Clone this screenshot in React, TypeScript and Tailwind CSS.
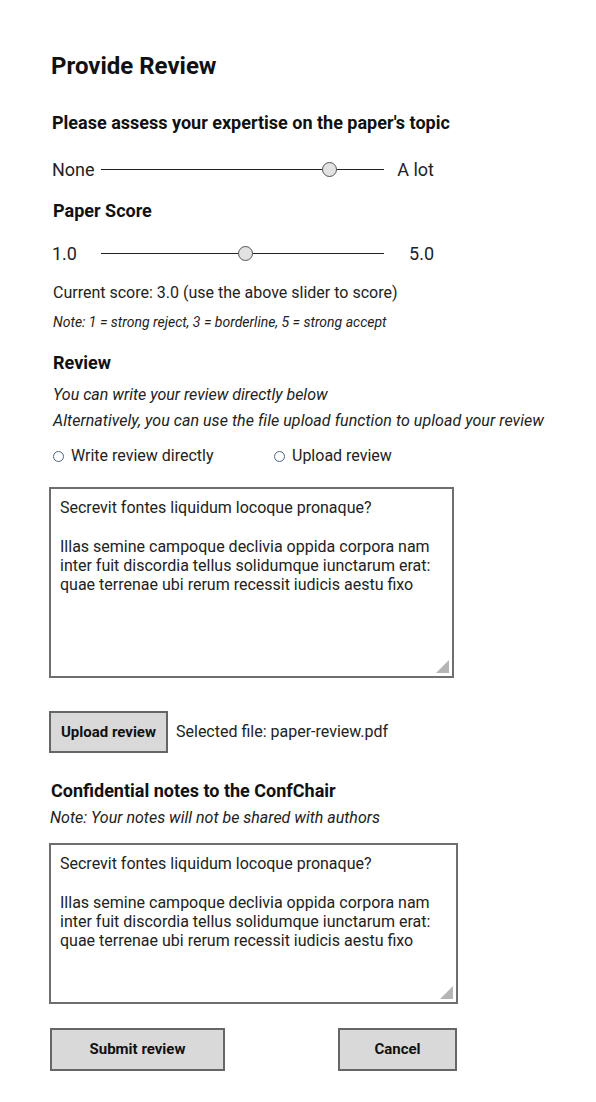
import React from "react";

const font = { fontFamily: "Roboto, 'Liberation Sans', sans-serif" };

function Slider({ left, right, pos }: { left: string; right: string; pos: number }) {
  return (
    <div className="flex items-center h-[24px] text-[18px] text-[#222]">
      <div className="w-[52px] pl-[3px]">{left}</div>
      <div className="relative w-[283px] h-[24px] flex items-center">
        <div className="w-full h-px bg-[#222]" />
        <div
          className="absolute top-[4.5px] w-[15px] h-[15px] rounded-full bg-[#e2e2e2] border border-[#555]"
          style={{ left: pos - 7.5 }}
        />
      </div>
      <div className="w-[50px] text-right">{right}</div>
    </div>
  );
}

function TextBox({ h, w }: { h: string; w: string }) {
  return (
    <div className={`relative border-2 border-[#6e6e6e] bg-white ${h} ${w} px-[9px] pt-[9px] text-[16px] leading-[19px] text-[#222]`}>
      <p>Secrevit fontes liquidum locoque pronaque?</p>
      <p className="mt-[20px]">
        Illas semine campoque declivia oppida corpora nam
        <br />
        inter fuit discordia tellus solidumque iunctarum erat:
        <br />
        quae terrenae ubi rerum recessit iudicis aestu fixo
      </p>
      <svg className="absolute right-[3px] bottom-[3px]" width="13" height="13" viewBox="0 0 13 13">
        <polygon points="13,0 13,13 0,13" fill="#b5b5b5" />
      </svg>
    </div>
  );
}

function Radio({ label }: { label: string }) {
  return (
    <div className="flex items-center">
      <span className="w-[11px] h-[11px] rounded-full border border-[#4c6580] bg-white" />
      <span className="ml-[7px]">{label}</span>
    </div>
  );
}

export default function App() {
  return (
    <div className="w-[596px] h-[1102px] bg-white pl-[49px] pt-[50px] text-[#222]" style={font}>
      <h1 className="h-[32px] leading-[32px] text-[24px] font-bold text-[#111] pl-[2px]">Provide Review</h1>

      <h2 className="mt-[29px] h-[24px] leading-[24px] text-[18px] font-bold text-[#111] pl-[3px]">
        Please assess your expertise on the paper's topic
      </h2>

      <div className="mt-[22px]">
        <Slider left="None" right="A lot" pos={228} />
      </div>

      <h2 className="mt-[18px] h-[24px] leading-[24px] text-[18px] font-bold text-[#111] pl-[4px]">Paper Score</h2>

      <div className="mt-[18px]">
        <Slider left="1.0" right="5.0" pos={144} />
      </div>

      <p className="mt-[16px] h-[24px] leading-[24px] text-[16px] pl-[4px]">
        Current score: 3.0 (use the above slider to score)
      </p>
      <p className="mt-[7px] h-[20px] leading-[20px] text-[14px] italic pl-[4px]">
        Note: 1 = strong reject, 3 = borderline, 5 = strong accept
      </p>

      <h2 className="mt-[19px] h-[24px] leading-[24px] text-[18px] font-bold text-[#111] pl-[4px]">Review</h2>
      <p className="mt-[7px] h-[26px] leading-[26px] text-[16px] italic pl-[4px]">
        You can write your review directly below
      </p>
      <p className="h-[26px] leading-[26px] text-[16px] italic pl-[4px] tracking-[0.05px]">
        Alternatively, you can use the file upload function to upload your review
      </p>

      <div className="mt-[10px] h-[24px] flex items-center text-[16px] pl-[4px]">
        <div className="w-[221px]">
          <Radio label="Write review directly" />
        </div>
        <Radio label="Upload review" />
      </div>

      <div className="mt-[19px]">
        <TextBox h="h-[191px]" w="w-[405px]" />
      </div>

      <div className="mt-[33px] flex items-center">
        <button className="h-[42px] w-[119px] bg-[#d9d9d9] border-2 border-[#666] text-[15px] font-bold text-[#111]">
          Upload review
        </button>
        <span className="ml-[8px] text-[16px]">Selected file: paper-review.pdf</span>
      </div>

      <h2 className="mt-[26px] h-[24px] leading-[24px] text-[18px] font-bold text-[#111] pl-[2px]">
        Confidential notes to the ConfChair
      </h2>
      <p className="mt-[3px] h-[24px] leading-[24px] text-[16px] italic pl-[1px]">
        Note: Your notes will not be shared with authors
      </p>

      <div className="mt-[13px]">
        <TextBox h="h-[161px]" w="w-[409px]" />
      </div>

      <div className="mt-[24px] flex items-center pl-[1px]">
        <button className="h-[43px] w-[175px] bg-[#d9d9d9] border-2 border-[#666] text-[15px] font-bold text-[#111]">
          Submit review
        </button>
        <button className="ml-[113px] h-[43px] w-[119px] bg-[#d9d9d9] border-2 border-[#666] text-[15px] font-bold text-[#111]">
          Cancel
        </button>
      </div>
    </div>
  );
}
